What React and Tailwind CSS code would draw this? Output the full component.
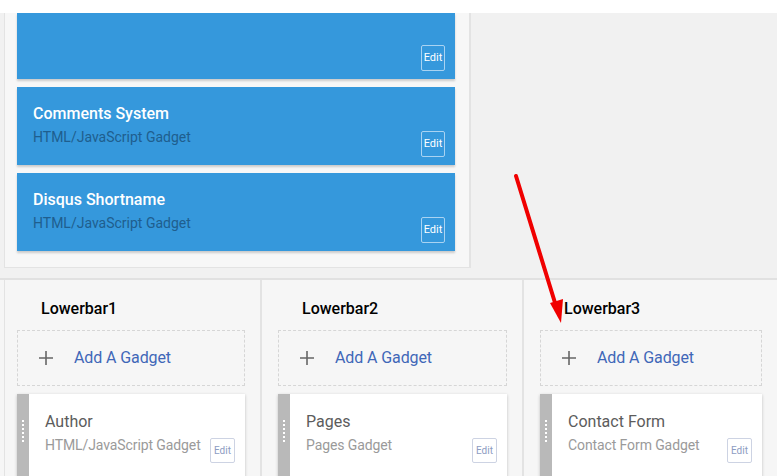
import React from 'react';

const topGadgets = [
  { title: '', type: '', h: 'h-[66px]' },
  { title: 'Comments System', type: 'HTML/JavaScript Gadget', h: 'h-[78px]' },
  { title: 'Disqus Shortname', type: 'HTML/JavaScript Gadget', h: 'h-[78px]' },
];

const sections = [
  { name: 'Lowerbar1', title: 'Author', type: 'HTML/JavaScript Gadget', w: 'w-[258px] ml-[4px] border-l border-l-[#e3e3e3] pl-[12px]' },
  { name: 'Lowerbar2', title: 'Pages', type: 'Pages Gadget', w: 'w-[262px] pl-4' },
  { name: 'Lowerbar3', title: 'Contact Form', type: 'Contact Form Gadget', w: 'flex-1 pl-4' },
];

const BlueCard = ({ g }) => (
  <div className={`relative ${g.h} bg-[#3598dc] shadow-[0_2px_2px_rgba(0,0,0,0.18)] pl-4 pt-[17px]`}>
    {g.title && (
      <>
        <div className="text-[16px] font-medium text-white leading-5">{g.title}</div>
        <div className="text-[14px] text-[#1f5e8e] leading-5 mt-[3px]">{g.type}</div>
      </>
    )}
    <button className="absolute right-[10px] bottom-[8px] w-[24px] h-[26px] border border-[#a9d3f2] rounded-[2px] text-[11px] text-white flex items-center justify-center">
      Edit
    </button>
  </div>
);

const Column = ({ s, last }) => (
  <div className={`${s.w} ${last ? '' : 'border-r-2 border-r-[#e3e3e3]'} pr-[15px] pt-[19px]`}>
    <div className="pl-[24px] text-[16px] font-medium text-black leading-5">{s.name}</div>
    <div className="mt-[11px] h-[56px] border border-dashed border-[#d6d6d6] flex items-center pl-[21px]">
      <svg width="14" height="14" viewBox="0 0 14 14" className="text-[#666]">
        <path d="M7 0v14M0 7h14" stroke="currentColor" strokeWidth="1.6" />
      </svg>
      <span className="ml-[21px] text-[16px] text-[#3f67b8] tracking-[-0.1px]">Add A Gadget</span>
    </div>
    <div className="mt-[8px] h-[90px] bg-white shadow-[0_1px_3px_rgba(0,0,0,0.22)] flex">
      <div className="w-[12px] bg-[#b9b9b9] flex flex-col items-center pt-[26px] gap-[2px]">
        {[0, 1, 2, 3, 4, 5].map((i) => (
          <div key={i} className="w-[2px] h-[2px] bg-white" />
        ))}
      </div>
      <div className="relative flex-1 pl-[16px] pt-[18px]">
        <div className="text-[16px] text-[#5c5c5c] leading-5">{s.title}</div>
        <div className="text-[14px] text-[#9a9a9a] leading-5 mt-[3px] tracking-[-0.1px]">{s.type}</div>
        <button className="absolute right-[10px] top-[44px] w-[25px] h-[25px] border border-[#cdd3e3] rounded-[2px] text-[10px] text-[#8d9cc2] flex items-center justify-center">
          Edit
        </button>
      </div>
    </div>
  </div>
);

export default function App() {
  return (
    <div className="relative w-[777px] h-[476px] overflow-hidden bg-[#f1f1f1]" style={{ fontFamily: 'Roboto, "Noto Sans", sans-serif' }}>
      <div className="h-[13px] bg-white" />

      <div className="flex">
        <div className="w-[467px] ml-[4px] h-[255px] bg-[#f7f7f7] border-l border-r-2 border-b border-[#e3e3e3] pl-[12px] pr-[14px] flex flex-col gap-[8px]">
          {topGadgets.map((g, i) => (
            <BlueCard key={i} g={g} />
          ))}
        </div>
      </div>

      <div className="mt-[10px] flex h-[200px] bg-[#f6f6f6] border-t-2 border-[#e1e1e1]">
        {sections.map((s, i) => (
          <Column key={s.name} s={s} last={i === sections.length - 1} />
        ))}
      </div>

      <svg className="absolute left-0 top-0 pointer-events-none" width="777" height="476">
        <line x1="516" y1="176" x2="556" y2="306" stroke="#f00000" strokeWidth="4" strokeLinecap="round" />
        <polygon points="561,323 550,303 563,299" fill="#f00000" />
      </svg>
    </div>
  );
}
